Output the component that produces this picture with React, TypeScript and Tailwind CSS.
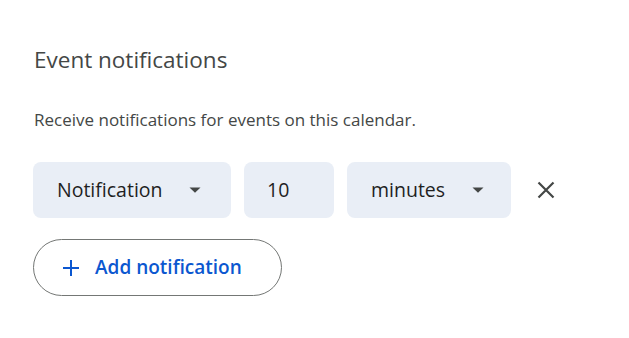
import React from "react";

const Caret = () => (
  <svg width="12" height="6" viewBox="0 0 12 6" className="shrink-0">
    <path d="M0.5 0.5 L11.5 0.5 L6 5.8 Z" fill="#444746" />
  </svg>
);

export default function App() {
  return (
    <div
      className="w-[629px] h-[338px] bg-white pl-[33px] pt-[46px]"
      style={{ fontFamily: "'Open Sans', 'Noto Sans', sans-serif" }}
    >
      <h2 className="text-[22.5px] leading-[28px] text-[#444746] pl-[1px]">Event notifications</h2>
      <p className="mt-[36px] text-[17px] leading-[20px] text-[#444746] pl-[1px]">
        Receive notifications for events on this calendar.
      </p>
      <div className="mt-[32px] flex items-center gap-[13px]">
        <div className="w-[198px] h-[56px] rounded-lg bg-[#e9eef6] flex items-center pl-[24px] pr-[30px] justify-between text-[19.5px] text-[#1f1f1f]">
          <span>Notification</span>
          <Caret />
        </div>
        <div className="w-[90px] h-[56px] rounded-lg bg-[#e9eef6] flex items-center pl-[23px] text-[19.5px] text-[#1f1f1f]">
          10
        </div>
        <div className="w-[164px] h-[56px] rounded-lg bg-[#e9eef6] flex items-center pl-[24px] pr-[27px] justify-between text-[19.5px] text-[#1f1f1f]">
          <span>minutes</span>
          <Caret />
        </div>
        <div className="w-[44px] h-[44px] flex items-center justify-center">
          <svg width="18" height="18" viewBox="0 0 18 18">
            <path d="M1.5 1.5 L16.5 16.5 M16.5 1.5 L1.5 16.5" stroke="#444746" strokeWidth="2.2" />
          </svg>
        </div>
      </div>
      <button className="mt-[21px] w-[249px] h-[57px] rounded-full border border-[#747775] flex items-center pl-[29px] gap-[16px] text-[19px] font-semibold text-[#0b57d0]">
        <svg width="16" height="16" viewBox="0 0 16 16">
          <path d="M8 0 V16 M0 8 H16" stroke="#0b57d0" strokeWidth="2" />
        </svg>
        <span>Add notification</span>
      </button>
    </div>
  );
}
